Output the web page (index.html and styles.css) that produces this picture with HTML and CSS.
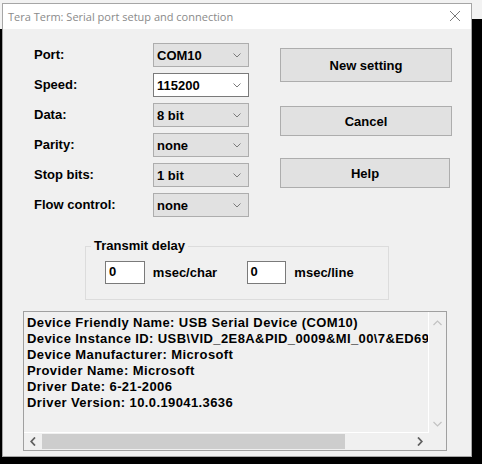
FILE: index.html
```html
<!DOCTYPE html>
<html>
<head>
<meta charset="utf-8">
<link rel="stylesheet" href="styles.css">
</head>
<body>
<div class="screen">
  <div class="topstrip"></div>
  <div class="row">
    <div class="gutter-left"></div>
    <div class="dialog">
      <div class="titlebar">
        <span class="title">Tera Term: Serial port setup and connection</span>
        <svg class="close" width="12" height="12" viewBox="0 0 12 12"><path d="M1 1L11 11M11 1L1 11" stroke="#7a7a7a" stroke-width="1" fill="none"/></svg>
      </div>
      <div class="body">
        <div class="top">
          <div class="form">
            <span class="lbl">Port:</span>
            <div class="combo"><span>COM10</span><svg class="chev" width="8" height="5" viewBox="0 0 8 5"><path d="M0.5 0.5L4 4L7.5 0.5" stroke="#7a7a7a" fill="none"/></svg></div>
            <span class="lbl">Speed:</span>
            <div class="combo edit"><span>115200</span><svg class="chev" width="8" height="5" viewBox="0 0 8 5"><path d="M0.5 0.5L4 4L7.5 0.5" stroke="#7a7a7a" fill="none"/></svg></div>
            <span class="lbl">Data:</span>
            <div class="combo"><span>8 bit</span><svg class="chev" width="8" height="5" viewBox="0 0 8 5"><path d="M0.5 0.5L4 4L7.5 0.5" stroke="#7a7a7a" fill="none"/></svg></div>
            <span class="lbl">Parity:</span>
            <div class="combo"><span>none</span><svg class="chev" width="8" height="5" viewBox="0 0 8 5"><path d="M0.5 0.5L4 4L7.5 0.5" stroke="#7a7a7a" fill="none"/></svg></div>
            <span class="lbl">Stop bits:</span>
            <div class="combo"><span>1 bit</span><svg class="chev" width="8" height="5" viewBox="0 0 8 5"><path d="M0.5 0.5L4 4L7.5 0.5" stroke="#7a7a7a" fill="none"/></svg></div>
            <span class="lbl">Flow control:</span>
            <div class="combo"><span>none</span><svg class="chev" width="8" height="5" viewBox="0 0 8 5"><path d="M0.5 0.5L4 4L7.5 0.5" stroke="#7a7a7a" fill="none"/></svg></div>
          </div>
          <div class="buttons">
            <div class="btn btn-new">New setting</div>
            <div class="btn btn-cancel">Cancel</div>
            <div class="btn btn-help">Help</div>
          </div>
        </div>
        <fieldset class="group">
          <legend>Transmit delay</legend>
          <div class="delay-row">
            <div class="field">0</div><span class="unit">msec/char</span>
            <div class="field">0</div><span class="unit">msec/line</span>
          </div>
        </fieldset>
        <div class="info">
          <div class="info-main">
            <div class="text">
              <div>Device Friendly Name: USB Serial Device (COM10)</div>
              <div>Device Instance ID: USB\VID_2E8A&amp;PID_0009&amp;MI_00\7&amp;ED69</div>
              <div>Device Manufacturer: Microsoft</div>
              <div>Provider Name: Microsoft</div>
              <div>Driver Date: 6-21-2006</div>
              <div>Driver Version: 10.0.19041.3636</div>
            </div>
            <div class="vscroll">
              <svg width="9" height="6" viewBox="0 0 9 6"><path d="M0.5 5L4.5 1L8.5 5" stroke="#c2c2c2" stroke-width="1.2" fill="none"/></svg>
              <svg width="9" height="6" viewBox="0 0 9 6"><path d="M0.5 1L4.5 5L8.5 1" stroke="#c2c2c2" stroke-width="1.2" fill="none"/></svg>
            </div>
          </div>
          <div class="hscroll">
            <div class="arrow"><svg width="6" height="9" viewBox="0 0 6 9"><path d="M5 0.5L1.2 4.5L5 8.5" stroke="#606060" stroke-width="1.8" fill="none"/></svg></div>
            <div class="track"><div class="thumb"></div></div>
            <div class="arrow"><svg width="6" height="9" viewBox="0 0 6 9"><path d="M1 0.5L4.8 4.5L1 8.5" stroke="#606060" stroke-width="1.8" fill="none"/></svg></div>
            <div class="corner"></div>
          </div>
        </div>
      </div>
    </div>
    <div class="gutter-right"></div>
  </div>
</div>
</body>
</html>
```
FILE: styles.css
```css
html, body {
  margin: 0;
  padding: 0;
  background: #000;
}
.screen {
  width: 482px;
  height: 464px;
  background: #000;
  overflow: hidden;
  display: flex;
  flex-direction: column;
}
.topstrip {
  height: 3px;
  background: #f2f2f2;
}
.row {
  display: flex;
}
.gutter-left {
  width: 2px;
  background: linear-gradient(#f2f2f2 0 26px, #000 26px);
}
.gutter-right {
  width: 10px;
  background: linear-gradient(#f2f2f2 0 16px, #000 16px);
}
.dialog {
  width: 468px;
  height: 452px;
  border: 1px solid #a6a6a6;
  background: #f0f0f0;
  display: flex;
  flex-direction: column;
  font-family: "Liberation Sans", Arial, sans-serif;
  font-weight: bold;
  font-size: 13px;
  color: #000;
}
.titlebar {
  height: 25px;
  background: #fff;
  display: flex;
  align-items: center;
  justify-content: space-between;
  padding: 0 10px 0 5px;
}
.title {
  font-family: "Open Sans", "Noto Sans", sans-serif;
  font-weight: normal;
  font-size: 11px;
  color: #8a8a8a;
  margin-top: -1px;
}
.close {
  margin-top: -1px;
}
.body {
  flex: 1;
  padding-top: 14px;
}
.top {
  display: flex;
  align-items: flex-start;
}
.form {
  margin-left: 31px;
  display: grid;
  grid-template-columns: 119px 96px;
  grid-auto-rows: 24px;
  row-gap: 6px;
  align-items: center;
}
.lbl {
  line-height: 16px;
}
.combo {
  height: 24px;
  box-sizing: border-box;
  border: 1px solid #adadad;
  background: #e1e1e1;
  display: flex;
  align-items: center;
  justify-content: space-between;
  padding: 0 7px 0 3px;
}
.combo.edit {
  background: #fff;
  border-color: #7a7a7a;
}
.buttons {
  margin-left: 31px;
  margin-top: 5px;
  display: flex;
  flex-direction: column;
}
.btn {
  box-sizing: border-box;
  width: 172px;
  border: 1px solid #adadad;
  background: #e1e1e1;
  display: flex;
  align-items: center;
  justify-content: center;
}
.btn-new { height: 34px; }
.btn-cancel { height: 30px; margin-top: 24px; }
.btn-help { height: 30px; margin-top: 22px; width: 170px; }
.group {
  box-sizing: border-box;
  width: 304px;
  margin: 21px 0 0 82px;
  padding: 7px 0 15px 0;
  border: 1px solid #dcdcdc;
  min-width: 0;
}
.group legend {
  margin-left: 5px;
  padding: 0 3px;
  line-height: 16px;
}
.delay-row {
  display: flex;
  align-items: center;
  padding-left: 19px;
}
.field {
  box-sizing: border-box;
  width: 40px;
  height: 23px;
  border: 1px solid #7a7a7a;
  background: #fff;
  padding: 2px 0 0 3px;
  line-height: 16px;
}
.unit {
  margin-left: 8px;
  width: 94px;
}
.info {
  box-sizing: border-box;
  width: 424px;
  height: 140px;
  margin: 11px 0 0 20px;
  border: 1px solid #a0a0a0;
  background: #f0f0f0;
  display: flex;
  flex-direction: column;
}
.info-main {
  display: flex;
  height: 121px;
}
.text {
  width: 405px;
  box-sizing: border-box;
  padding: 3px 0 0 3px;
  overflow: hidden;
  white-space: nowrap;
  line-height: 16px;
  letter-spacing: 0.4px;
  border-right: 1px solid #fff;
  border-bottom: 1px solid #fff;
}
.vscroll {
  width: 17px;
  display: flex;
  flex-direction: column;
  align-items: center;
  justify-content: space-between;
  padding: 8px 0 6px;
  box-sizing: border-box;
}
.hscroll {
  height: 17px;
  display: flex;
}
.arrow {
  width: 17px;
  display: flex;
  align-items: center;
  justify-content: center;
}
.track {
  width: 370px;
  padding: 1px 0;
  box-sizing: border-box;
}
.thumb {
  margin-left: 1px;
  width: 303px;
  height: 15px;
  background: #cdcdcd;
}
.corner {
  width: 17px;
}
```
